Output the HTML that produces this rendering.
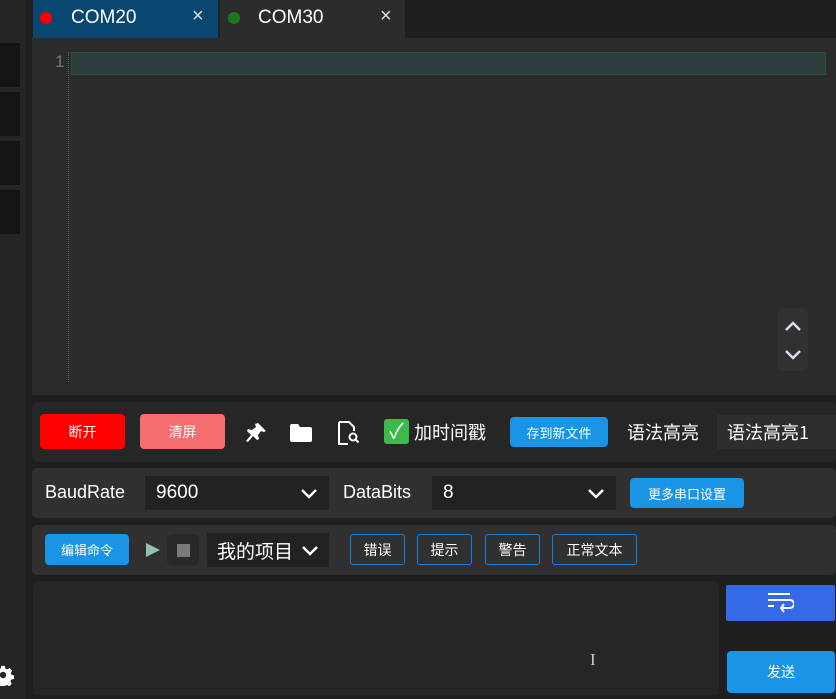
<!DOCTYPE html>
<html><head><meta charset="utf-8"><style>
*{margin:0;padding:0;box-sizing:border-box}
body{width:836px;height:699px;overflow:hidden;background:#1f1f1f;font-family:"Liberation Sans","Noto Sans CJK SC",sans-serif;color:#fff;position:relative}
.a{position:absolute}
.cn{font-family:"Noto Sans CJK SC","Liberation Sans",sans-serif}
.btn{position:absolute;border-radius:4px;display:flex;align-items:center;justify-content:center;font-size:14px}
.ob{position:absolute;border:1px solid #1a7fd4;border-radius:3px;display:flex;align-items:center;justify-content:center;font-size:14px;height:31px;top:534px}
.sel{position:absolute;background:#222;display:flex;align-items:center;font-size:19px;padding-left:11px}
</style></head><body>
<div class="a" style="left:0;top:0;width:26px;height:699px;background:#252525"></div>
<div class="a" style="left:0;top:43px;width:20px;height:44px;background:#141414"></div>
<div class="a" style="left:0;top:92px;width:20px;height:44px;background:#141414"></div>
<div class="a" style="left:0;top:141px;width:20px;height:44px;background:#141414"></div>
<div class="a" style="left:0;top:190px;width:20px;height:44px;background:#141414"></div>
<svg class="a" style="left:-8px;top:664px" width="22" height="22" viewBox="0 0 24 24"><path fill="#fff" d="M10 2h4l.6 3 2 1 2.6-1.6 2.8 2.8L20.4 9.8l1 2 2.6.6v4l-3 .6-1 2 1.6 2.6-2.8 2.8-2.6-1.6-2 1-.6 3h-4l-.6-3-2-1-2.6 1.6-2.8-2.8 1.6-2.6-1-2L0 16v-4l3-.6 1-2L2.4 6.8 5.2 4l2.6 1.6 2-1zM12 8.5a3.5 3.5 0 100 7 3.5 3.5 0 000-7z"/></svg>
<!-- tabs -->
<div class="a" style="left:33px;top:0;width:185px;height:38px;background:#094771"></div>
<div class="a" style="left:40px;top:12px;width:12px;height:12px;border-radius:50%;background:#f00"></div>
<div class="a" style="left:71px;top:7px;font-size:19px">COM20</div>
<div class="a" style="left:192px;top:5px;font-size:20px;color:#ddd">×</div>
<div class="a" style="left:220px;top:0;width:185px;height:38px;background:#2c2c2c"></div>
<div class="a" style="left:228px;top:12px;width:12px;height:12px;border-radius:50%;background:#1a7a1a"></div>
<div class="a" style="left:258px;top:7px;font-size:19px">COM30</div>
<div class="a" style="left:380px;top:5px;font-size:20px;color:#ddd">×</div>
<!-- editor -->
<div class="a" style="left:32px;top:38px;width:804px;height:357px;background:#2b2b2b"></div>
<div class="a" style="left:55px;top:52px;font-size:17px;color:#777">1</div>
<div class="a" style="left:68px;top:52px;width:0;height:330px;border-left:1px dotted #6a5a60"></div>
<div class="a" style="left:71px;top:52px;width:755px;height:23px;background:#2d3b3a;border:1px solid #22533e"></div>
<div class="a" style="left:777px;top:308px;width:31px;height:63px;background:#313131;border-radius:6px"></div>
<svg class="a" style="left:783px;top:318px" width="20" height="45" viewBox="0 0 20 45"><path d="M3 12l7-7 7 7M3 33l7 7 7-7" stroke="#dde" stroke-width="2.5" fill="none"/></svg>
<!-- row1 -->
<div class="a" style="left:32px;top:402px;width:804px;height:60px;background:#262626;border-radius:5px"></div>
<div class="btn cn" style="left:40px;top:414px;width:85px;height:35px;background:#f00">断开</div>
<div class="btn cn" style="left:140px;top:414px;width:85px;height:35px;background:#f46e6e">清屏</div>
<svg class="a" style="left:244px;top:421px" width="24" height="24" viewBox="0 0 24 24"><path fill="#fff" d="M14 2l8 8-2 1-3-1-3 4 1 4-2 1-4-4-5 6-2-1 5-6-4-4 1-2 4 1 4-3-1-3z"/></svg>
<svg class="a" style="left:289px;top:422px" width="24" height="22" viewBox="0 0 24 22"><path fill="#fff" d="M1 4a2 2 0 012-2h6l2 3h10a2 2 0 012 2v11a2 2 0 01-2 2H3a2 2 0 01-2-2z"/></svg>
<svg class="a" style="left:337px;top:420px" width="24" height="26" viewBox="0 0 24 26"><path d="M2 2h10l5 5v4M11 24H2V2" stroke="#fff" stroke-width="2" fill="none"/><circle cx="16" cy="17" r="3.5" stroke="#fff" stroke-width="2" fill="none"/><path d="M18.5 19.5l3 3" stroke="#fff" stroke-width="2"/></svg>
<div class="a" style="left:384px;top:419px;width:25px;height:25px;background:#3cba4c;border-radius:3px;font-size:21px;text-align:center;line-height:25px">✓</div>
<div class="a cn" style="left:414px;top:419px;font-size:18px">加时间戳</div>
<div class="btn cn" style="left:510px;top:417px;width:98px;height:30px;background:#1a95e6;font-size:13px">存到新文件</div>
<div class="a cn" style="left:627px;top:419px;font-size:18px">语法高亮</div>
<div class="a cn" style="left:717px;top:415px;width:119px;height:34px;background:#2e2e2e;font-size:18px;padding:4px 10px">语法高亮1</div>
<!-- row2 -->
<div class="a" style="left:32px;top:468px;width:804px;height:50px;background:#303030;border-radius:5px"></div>
<div class="a" style="left:45px;top:482px;font-size:18px">BaudRate</div>
<div class="sel" style="left:145px;top:476px;width:184px;height:34px">9600</div>
<div class="a" style="left:343px;top:482px;font-size:18px">DataBits</div>
<div class="sel" style="left:432px;top:476px;width:184px;height:34px">8</div>
<svg class="a" style="left:300px;top:486px" width="18" height="14"><path d="M2 4l7 7 7-7" stroke="#fff" stroke-width="2.5" fill="none"/></svg>
<svg class="a" style="left:587px;top:486px" width="18" height="14"><path d="M2 4l7 7 7-7" stroke="#fff" stroke-width="2.5" fill="none"/></svg>
<div class="btn cn" style="left:630px;top:478px;width:114px;height:30px;background:#1a95e6;font-size:13px">更多串口设置</div>
<!-- row3 -->
<div class="a" style="left:32px;top:525px;width:804px;height:50px;background:#303030;border-radius:5px"></div>
<div class="btn cn" style="left:45px;top:534px;width:84px;height:31px;background:#1a95e6;font-size:13px">编辑命令</div>
<svg class="a" style="left:145px;top:542px" width="16" height="16"><path d="M1 1l14 7-14 7z" fill="#8ec3b4"/></svg>
<div class="a" style="left:167px;top:534px;width:32px;height:32px;background:#292929;border-radius:6px"></div>
<div class="a" style="left:177px;top:544px;width:13px;height:13px;background:#7a7a7a"></div>
<div class="sel cn" style="left:207px;top:533px;width:122px;height:34px;padding-left:10px">我的项目</div>
<svg class="a" style="left:301px;top:543px" width="18" height="14"><path d="M2 4l7 7 7-7" stroke="#fff" stroke-width="2.5" fill="none"/></svg>
<div class="ob cn" style="left:350px;width:55px">错误</div>
<div class="ob cn" style="left:417px;width:55px">提示</div>
<div class="ob cn" style="left:485px;width:55px">警告</div>
<div class="ob cn" style="left:552px;width:85px">正常文本</div>
<!-- input -->
<div class="a" style="left:33px;top:581px;width:686px;height:114px;background:#262626;border-radius:5px"></div>
<div class="a" style="left:590px;top:650px;font-size:17px;color:#ccc;font-family:'Liberation Serif',serif">I</div>
<div class="a" style="left:726px;top:585px;width:109px;height:36px;background:#356ae6;border-radius:2px"></div>
<svg class="a" style="left:766px;top:591px" width="28" height="24" viewBox="0 0 28 24"><path d="M2 3h22M2 9h22M2 15h6M24 9a4 4 0 010 8h-9M18 13l-3 4 3 4" stroke="#fff" stroke-width="2" fill="none"/></svg>
<div class="btn cn" style="left:727px;top:651px;width:108px;height:42px;background:#1a95e6;font-size:14px">发送</div>
</body></html>
